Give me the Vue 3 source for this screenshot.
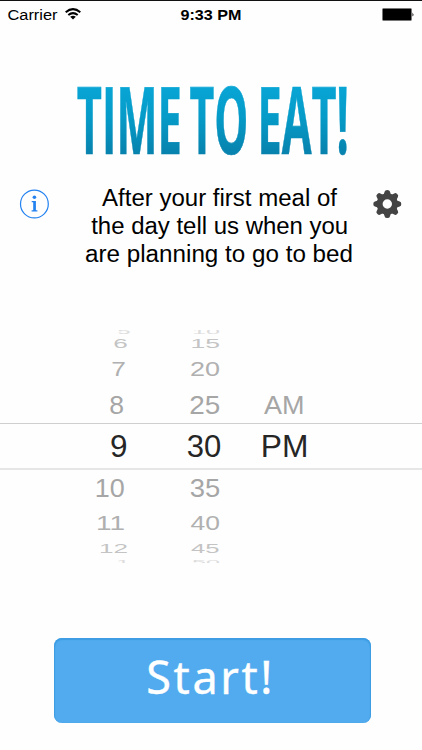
<script setup>
// Each wheel row: height of its slot, baseline inside it, glyph scale, and the labels with their left edge and width.
const rows = [
  { h: 5, base: 3.8, size: 7.5, fill: '#dcdcdc', cells: [['5', 117.5, 13], ['10', 192, 28]] },
  { h: 18, base: 13.3, size: 12.5, fill: '#c4c4c4', cells: [['6', 113.3, 14.5], ['15', 190.5, 29.5]] },
  { h: 32, base: 23, size: 20.5, fill: '#b0b0b0', cells: [['7', 111.3, 14.6], ['20', 190, 30]] },
  { h: 38, base: 28.7, size: 26.5, fill: '#a6a6a6', cells: [['8', 109.3, 14.8], ['25', 189.3, 31], ['AM', 264, 40.5]] },
  { h: 47, base: 34, size: 31, fill: '#262626', selected: true, cells: [['9', 110, 17.5], ['30', 186.8, 34.5], ['PM', 260.8, 47.6]] },
  { h: 36, base: 26.7, size: 26.5, fill: '#a6a6a6', cells: [['10', 94.8, 30], ['35', 189.8, 30.5]] },
  { h: 34, base: 24, size: 20.5, fill: '#b0b0b0', cells: [['11', 96, 29], ['40', 190.5, 29.5]] },
  { h: 18, base: 12.6, size: 12, fill: '#c4c4c4', cells: [['12', 99, 29], ['45', 191, 28.5]] },
  { h: 5, base: 7, size: 7, fill: '#dcdcdc', cells: [['1', 116.5, 13], ['50', 192, 28]] },
]
const teeth = [0, 45, 90, 135, 180, 225, 270, 315]
</script>

<template>
  <main class="screen">
    <header class="status">
      <svg width="422" height="30" viewBox="0 0 422 30">
        <text x="7.5" y="20.4" font-size="15.5" textLength="50" lengthAdjust="spacingAndGlyphs">Carrier</text>
        <g fill="none" stroke="#000" stroke-width="2">
          <path d="M65.7 12.3Q73 6 80.3 12.3" />
          <path d="M68.3 15.1Q73 11.2 77.7 15.1" />
        </g>
        <path d="M70.2 16.8Q73 14.7 75.8 16.8L73 19.6Z" />
        <text x="180.5" y="20.2" font-size="15.5" font-weight="bold" textLength="61" lengthAdjust="spacingAndGlyphs">9:33 PM</text>
        <rect x="382.5" y="8.5" width="29" height="12" rx="1" stroke="#777" />
        <path d="M412.5 12.5Q414.3 14.5 412.5 16.5Z" />
      </svg>
    </header>

    <h1 class="title">
      <svg width="422" height="90" viewBox="0 0 422 90">
        <defs>
          <linearGradient id="ink" gradientUnits="userSpaceOnUse" x1="0" y1="12" x2="0" y2="79">
            <stop offset="0" stop-color="#08a5d5" />
            <stop offset=".45" stop-color="#069bc8" />
            <stop offset="1" stop-color="#0782ad" />
          </linearGradient>
        </defs>
        <g fill="url(#ink)" stroke="url(#ink)" stroke-width=".7" font-size="93">
          <text x="76.8" y="78.7" textLength="105" lengthAdjust="spacingAndGlyphs">TIME</text>
          <text x="189.5" y="78.7" textLength="59" lengthAdjust="spacingAndGlyphs">TO</text>
          <text x="257.5" y="78.7" textLength="91.5" lengthAdjust="spacingAndGlyphs">EAT!</text>
        </g>
      </svg>
    </h1>

    <section class="intro">
      <svg class="info" width="30" height="30" viewBox="0 0 30 30">
        <circle cx="15.4" cy="15" r="13.9" fill="none" stroke="#2382f0" stroke-width="1.2" />
        <circle cx="15.4" cy="8.2" r="1.8" fill="#2382f0" />
        <path d="M12.7 12H16.9V21.2H18.4V22.4H12.6V21.2H14.2V13.2H12.7Z" fill="#2382f0" />
      </svg>
      <svg class="message" width="274" height="90" viewBox="82 180 274 90">
        <text x="102" y="206.4" textLength="235" lengthAdjust="spacingAndGlyphs">After your first meal of</text>
        <text x="91.2" y="234.4" textLength="257" lengthAdjust="spacingAndGlyphs">the day tell us when you</text>
        <text x="85" y="262.4" textLength="268" lengthAdjust="spacingAndGlyphs">are planning to go to bed</text>
      </svg>
      <svg class="gear" width="30" height="30" viewBox="-15.3 -15 30 30">
        <g fill="#444">
          <path v-for="a in teeth" :key="a" :transform="`rotate(${a})`" d="M-5 -8.5Q-2.9 -10 -2.6 -12.4Q-2.4 -14 0 -14Q2.4 -14 2.6 -12.4Q2.9 -10 5 -8.5Z" />
          <path fill-rule="evenodd" d="M0 -10.4A10.4 10.4 0 1 1 0 10.4A10.4 10.4 0 1 1 0 -10.4ZM0 -4.7A4.7 4.7 0 1 0 0 4.7A4.7 4.7 0 1 0 0 -4.7Z" />
        </g>
      </svg>
    </section>

    <section class="wheel">
      <div v-for="(row, i) in rows" :key="i" class="row" :class="{ selected: row.selected }">
        <svg width="422" :height="row.h" :viewBox="`0 0 422 ${row.h}`">
          <text
            v-for="[label, x, w] in row.cells"
            :key="label"
            :transform="`translate(${x} ${row.base}) scale(${row.size / 31.5} ${row.size / 31.5})`"
            :textLength="w * 31.5 / row.size"
            lengthAdjust="spacingAndGlyphs"
            font-size="31.5"
            :fill="row.fill"
          >{{ label }}</text>
        </svg>
      </div>
    </section>

    <button class="start">
      <svg width="317" height="85" viewBox="0 0 317 85">
        <text x="92.3" y="55.8" font-size="45" fill="#fff" stroke="#fff" stroke-width=".4" textLength="126" lengthAdjust="spacing">Start!</text>
      </svg>
    </button>
  </main>
</template>

<style>
body { margin: 0; background: #fefefe; }
</style>

<style scoped>
.screen {
  box-sizing: border-box;
  width: 422px;
  height: 750px;
  display: flex;
  flex-direction: column;
  overflow: hidden;
  background: #fefefe;
  border-top: 1px solid #111;
  font-family: "Liberation Sans", Arial, sans-serif;
  color: #000;
}
svg { display: block; }
.status { height: 30px; margin-top: -1px; }
.title {
  margin: 45px 0 0;
  height: 90px;
  font-family: "Open Sans", "Noto Sans", sans-serif;
  font-weight: 700;
}
.intro {
  display: flex;
  align-items: flex-start;
  height: 90px;
  margin-top: 15px;
  padding-left: 19px;
}
.info { margin-top: 9px; }
.message { margin-left: 33px; font-size: 23.5px; }
.gear { margin: 9px 0 0 16px; }
.wheel { margin-top: 60px; height: 233px; }
.row svg { overflow: hidden; }
.selected {
  box-sizing: border-box;
  height: 47px;
  background: linear-gradient(#cfcfcf, #cfcfcf) top / 100% 1px no-repeat,
    linear-gradient(#e6e6e6, #e6e6e6) bottom / 100% 2px no-repeat;
}
.start {
  box-sizing: border-box;
  width: 317px;
  height: 85px;
  margin: 75px 0 0 54px;
  padding: 0;
  border: 0;
  border-radius: 8px;
  background: #51abee;
  box-shadow: inset 0 1px 1px 1px #3d9ce3;
  font-family: "Noto Sans", "Open Sans", sans-serif;
}
</style>
